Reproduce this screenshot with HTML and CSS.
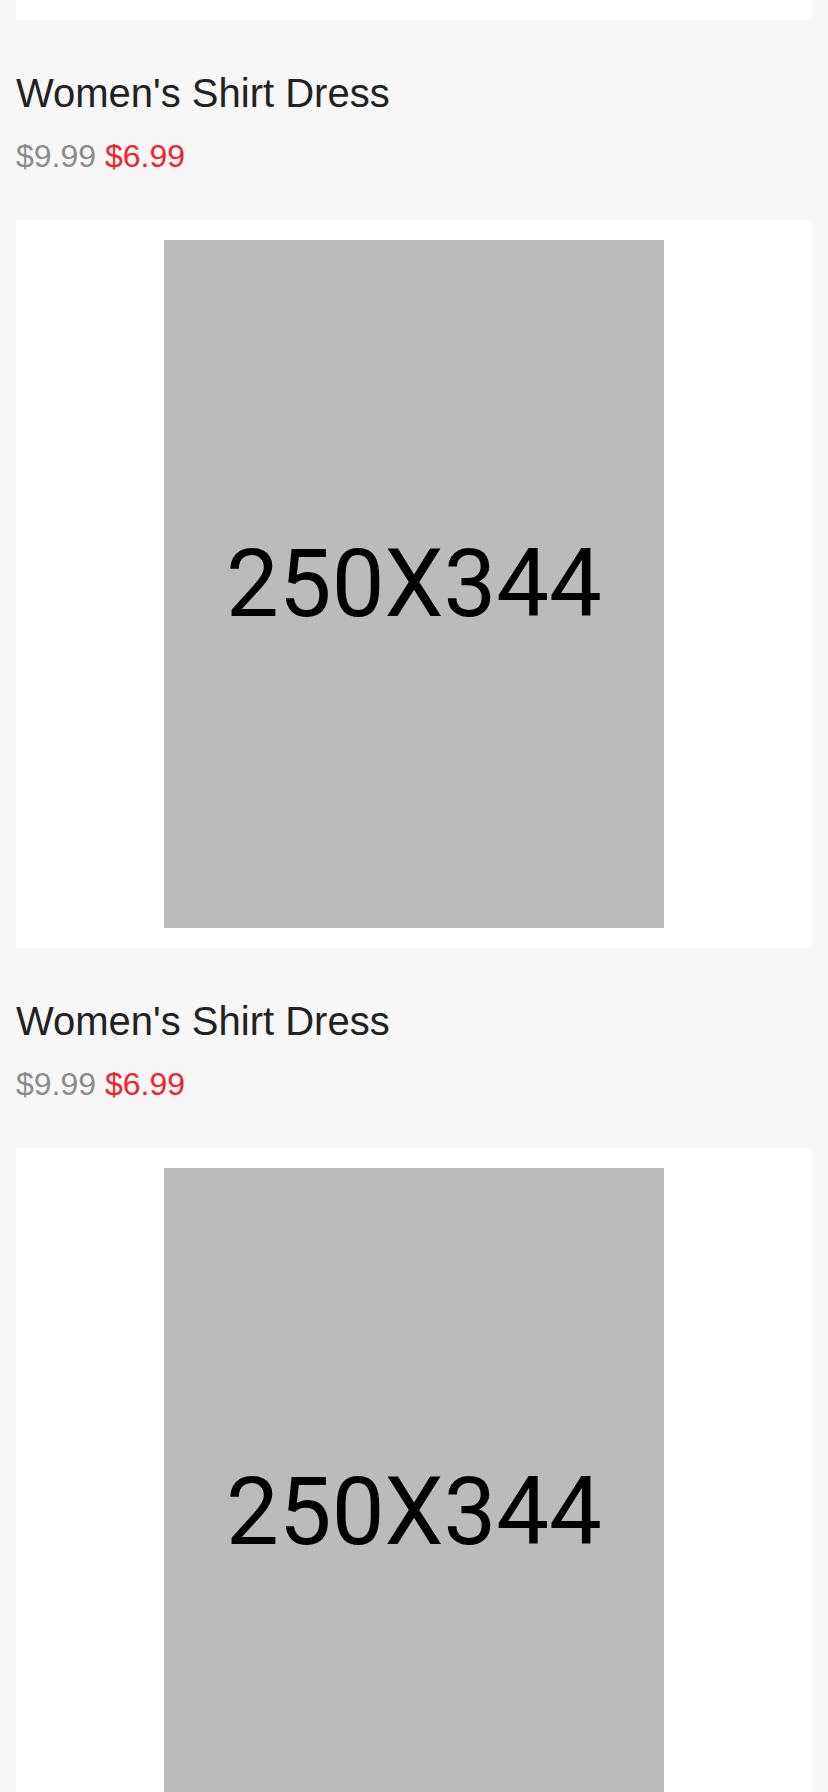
FILE: index.html
```html
<!DOCTYPE html>
<html lang="en">
<head>
<meta charset="utf-8">
<title>Products</title>
<link rel="stylesheet" href="styles.css">
</head>
<body>
<main class="feed">
  <div class="card card--tail"></div>
  <section class="info">
    <h2 class="title">Women's Shirt Dress</h2>
    <p class="price"><span class="old">$9.99</span> <span class="new">$6.99</span></p>
  </section>
  <div class="card">
    <div class="ph"><span>250X344</span></div>
  </div>
  <section class="info">
    <h2 class="title">Women's Shirt Dress</h2>
    <p class="price"><span class="old">$9.99</span> <span class="new">$6.99</span></p>
  </section>
  <div class="card">
    <div class="ph"><span>250X344</span></div>
  </div>
</main>
</body>
</html>
```
FILE: styles.css
```css
html, body {
  margin: 0;
  padding: 0;
  background: #f7f7f7;
}
body {
  font-family: "Liberation Sans", Arial, sans-serif;
}
.feed {
  padding: 0 16px;
  display: flex;
  flex-direction: column;
}
.card {
  background: #fff;
  padding: 20px 0;
  display: flex;
  justify-content: center;
}
.card--tail {
  padding: 0;
  height: 20px;
}
.ph {
  width: 500px;
  height: 688px;
  background: #bbbbbb;
  display: flex;
  align-items: center;
  justify-content: center;
}
.ph span {
  font-family: Roboto, "Noto Sans", sans-serif;
  font-size: 94px;
  color: #000;
  line-height: 1;
}
.info {
  height: 200px;
  box-sizing: border-box;
  padding-top: 50px;
}
.title {
  margin: 0;
  font-size: 40px;
  font-weight: normal;
  color: #222;
  line-height: 46px;
}
.price {
  margin: 22px 0 0;
  font-size: 32px;
  line-height: 37px;
}
.old {
  color: #8c8c8c;
}
.new {
  color: #f5222d;
}
```
